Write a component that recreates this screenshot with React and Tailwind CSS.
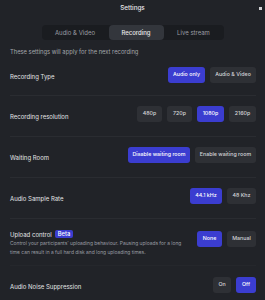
import React from "react";

function Btn({ active, children, className = "" }) {
  return (
    <div
      className={
        "h-[16px] flex items-center justify-center rounded-[3px] text-[5.3px] font-medium " +
        (active ? "bg-[#3b3dd0] text-white " : "bg-[#2e3035] text-[#d4d5d8] ") +
        className
      }
    >
      {children}
    </div>
  );
}

function Row({ label, children, last }) {
  return (
    <div className={"flex items-center justify-between h-[41px] pt-[10px] pb-[14px] " + (last ? "" : "border-b border-[#2a2c31]")}>
      <div className="text-[6px] text-[#e4e5e7] mt-[4px]">{label}</div>
      <div className="flex gap-[5px]">{children}</div>
    </div>
  );
}

export default function App() {
  return (
    <div
      className="w-[265px] h-[300px] bg-[#212328] overflow-hidden"
      style={{ fontFamily: "Inter, 'Noto Sans', sans-serif" }}
    >
      <div className="relative h-[17px] flex items-center justify-center">
        <span className="text-[6.3px] font-medium text-[#e8e8ea]">Settings</span>
        <div className="absolute right-[3px] top-[7px] w-[3px] h-[3px] bg-[#cfd0d2]" />
      </div>
      <div className="mt-[8px] mx-auto w-[182px] h-[15px] bg-[#1a1c20] rounded-[4px] flex text-[6px]">
        <div className="w-[67px] flex items-center justify-center text-[#9a9da3]">Audio &amp; Video</div>
        <div className="w-[55px] flex items-center justify-center bg-[#33363c] rounded-[4px] text-[#e8e8ea] font-medium">Recording</div>
        <div className="w-[60px] flex items-center justify-center text-[#9a9da3]">Live stream</div>
      </div>
      <div className="mt-[7px] h-[10px] flex items-center px-[10px] text-[5.8px] text-[#a3a6ab]">
        These settings will apply for the next recording
      </div>
      <div className="pl-[10px] pr-[9px]">
        <div className="flex items-center justify-between h-[39px] pt-[10px] pb-[13px] border-b border-[#2a2c31]">
          <div className="text-[6px] text-[#e4e5e7] mt-[4px]">Recording Type</div>
          <div className="flex gap-[5px]">
            <Btn active className="w-[37px]">Audio only</Btn>
            <Btn className="w-[46px]">Audio &amp; Video</Btn>
          </div>
        </div>
        <Row label="Recording resolution">
          <Btn className="w-[25px]">480p</Btn>
          <Btn className="w-[25px]">720p</Btn>
          <Btn active className="w-[27px]">1080p</Btn>
          <Btn className="w-[27px]">2160p</Btn>
        </Row>
        <Row label="Waiting Room">
          <Btn active className="w-[62px]">Disable waiting room</Btn>
          <Btn className="w-[61px]">Enable waiting room</Btn>
        </Row>
        <Row label="Audio Sample Rate">
          <Btn active className="w-[32px]">44.1 kHz</Btn>
          <Btn className="w-[29px]">48 Khz</Btn>
        </Row>
        <div className="flex items-start justify-between gap-[6px] pt-[10px] pb-[9px] border-b border-[#25272c]">
          <div className="flex-1">
            <div className="flex items-center gap-[3px] h-[10px]">
              <span className="text-[6px] text-[#e4e5e7]">Upload control</span>
              <span className="h-[8px] px-[3px] rounded-[2px] bg-[#3b3dd0] text-white text-[5.8px] font-medium flex items-center">Beta</span>
            </div>
            <div className="text-[4.9px] leading-[8.5px] text-[#9a9da3]">
              Control your participants' uploading behaviour. Pausing uploads for a long time can result in a full hard disk and long uploading times.
            </div>
          </div>
          <div className="flex gap-[5px] mt-[2px]">
            <Btn active className="w-[25px]">None</Btn>
            <Btn className="w-[29px]">Manual</Btn>
          </div>
        </div>
        <Row label="Audio Noise Suppression" last>
          <Btn className="w-[18px]">On</Btn>
          <Btn active className="w-[20px]">Off</Btn>
        </Row>
      </div>
    </div>
  );
}
